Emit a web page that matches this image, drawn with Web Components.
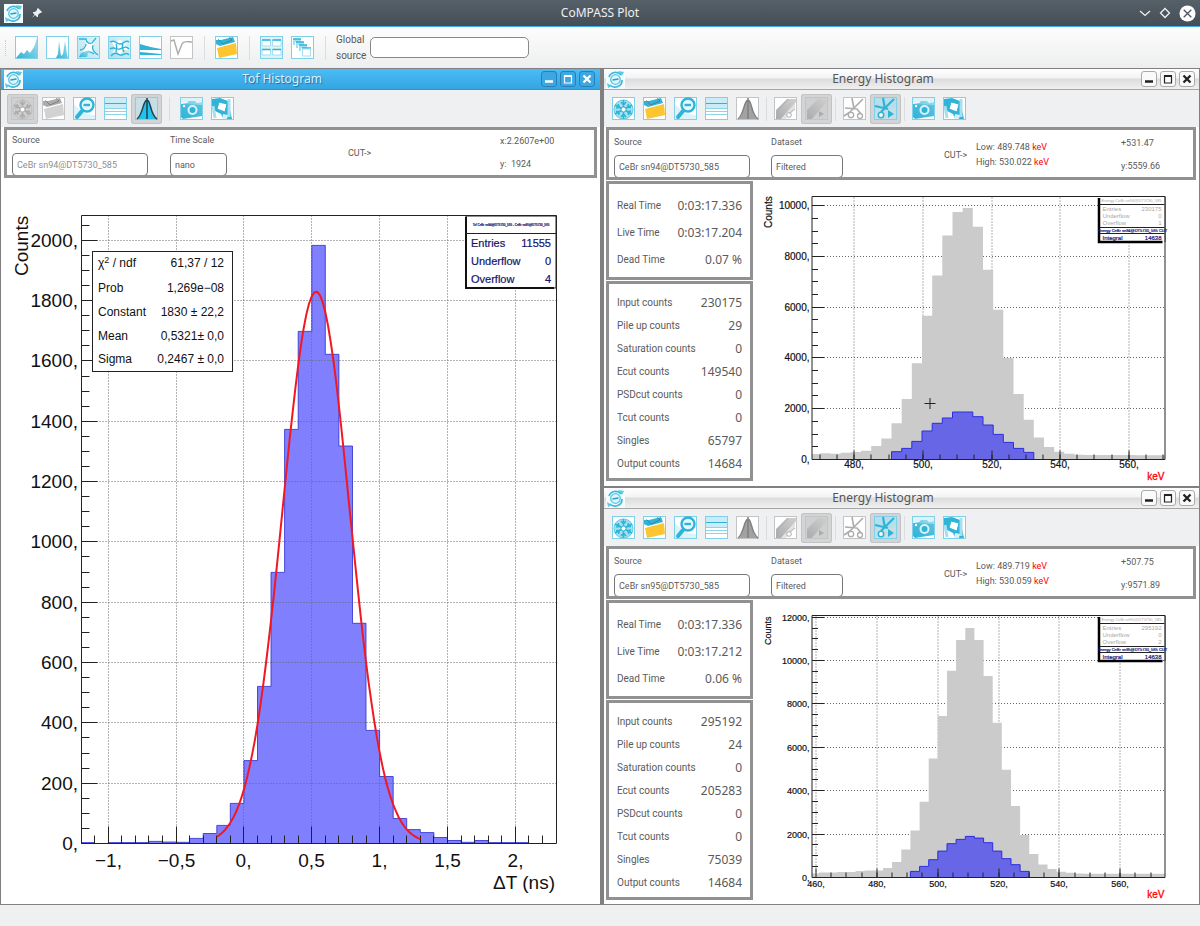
<!DOCTYPE html>
<html lang="en">
<head>
<meta charset="utf-8">
<meta name="viewport" content="width=device-width, initial-scale=1">
<title>CoMPASS Plot</title>
<style>
  html, body { margin: 0; height: 100%; }
  body { background: #eff0f1; color: #5a5a5a; font-family: Roboto, "Liberation Sans", sans-serif; }
</style>
</head>
<body>
<compass-app></compass-app>

<script>
/* ---------- icons ---------- */
const FRAME = '<rect x=".5" y=".5" width="22" height="22" fill="url(#bg)" stroke="var(--edge)"/>';
const ICONS = {
  spectrum: '<path d="M1 22 6 16 9 18 12 14 15 17 19 11 22 2V22z" fill="url(#g)"/>',
  peaks: '<path d="M10 22 12 18 13 5 15 20 17 18 19 5 21 18 22 22z" fill="url(#g)"/>',
  scatter: '<path d="M1 1H22V22H1z" fill="url(#g)" opacity=".35"/><path d="M7 2C10 7 13 8 19 3 16 9 15 12 18 18 14 14 10 14 3 21 8 13 11 10 7 2z" fill="#fff"/><path d="M2 3H9C9 7 13 8 15 7L19 2M9 8C9 11 6 14 3 14M16 9C15 12 16 16 21 19M3 21C8 15 12 14 17 18" fill="none" stroke="var(--ink)" stroke-width="1.3"/><path d="M4 17 12 14 10 21H2z" fill="url(#g)"/>',
  scatter2: '<path d="M1 1H22V22H1z" fill="url(#g)" opacity=".4"/><path d="M3 4 9 6 12 3 15 7 20 5 17 10 20 14 15 14 12 19 9 15 4 18 7 12z" fill="#fff"/><path d="M2 6C7 3 8 8 12 8S18 3 21 6M2 13C6 10 9 14 12 13S18 9 21 13M3 20C7 15 9 18 12 19S18 15 21 19M8 8C10 11 8 13 8 16M15 8C13 11 15 13 16 16" fill="none" stroke="var(--ink)" stroke-width="1.4"/>',
  bands: '<path d="M1 9 22 13V14H1zM1 16 22 18V19H1z" fill="var(--ink)"/><path d="M1 8 11 11H1z" fill="var(--ink)"/>',
  wave: '<path d="M1 5 4 4 8 18 12 8C14 4 18 6 22 6" fill="none" stroke="var(--ink)" stroke-width="1.4"/>',
  open: '<path d="M1 8V4L6 4 18 1 20 6 5 10z" fill="var(--ink)"/><path d="M3 3 8 8 17 4 14 1" fill="none" stroke="#555" stroke-opacity=".5"/><path d="M2 12 21 7 22 18 4 22z" fill="var(--folder)"/>',
  tile: '<path d="M1 1H22V22H1z" fill="var(--soft)" opacity=".4"/><path d="M2 4H10.500V10H2zM12.500 4H21V10H12.500zM2 13.500H10.500V19H2zM12.500 13.500H21V19H12.500z" fill="#fff" stroke="var(--soft)"/><path d="M2 4H10.500M12.500 4H21M2 13.500H10.500M12.500 13.500H21" stroke="var(--ink)" stroke-width="1.600"/>',
  cascade: '<path d="M2 3H10V6H4V9H2zM5 6H13V9H7V12H5zM8 9H16V12H10V15H8z" fill="var(--soft)"/><path d="M2 3H10M5 6H13M8 9H16M11 12H20" stroke="var(--ink)" stroke-width="1.500"/><rect x="11.500" y="13" width="8" height="7" fill="#fff" stroke="var(--soft)"/>',
  freeze: '<circle cx="11.5" cy="12.500" r="10" fill="var(--soft)"/><path d="M11.500 3V22M3 8 20 17M3 17 20 8M9 5 11.500 8 14 5M9 20 11.500 17 14 20M4 11 7.500 10.500 6 7M19 14 15.500 14.500 17 18M4 14.500 7.500 14.500 6.500 18M19 10.500 15.500 10.500 16.500 7" fill="none" stroke="var(--ink)" stroke-width="1.500"/><circle cx="11.500" cy="12.500" r="9.500" fill="none" stroke="var(--ink)" stroke-opacity=".5"/><circle cx="11.500" cy="12.500" r="2.500" fill="#fff" stroke="var(--ink)"/>',
  zoom: '<path d="M1 8C5 9 8 18 22 18V22H1z" fill="var(--soft)" opacity=".4"/><circle cx="14" cy="8" r="6.500" fill="#e4f7fc" stroke="var(--ink)" stroke-width="2.400"/><path d="M9 14 4 20" stroke="var(--ink)" stroke-width="4" stroke-linecap="round"/><path d="M10.500 8H17" stroke="var(--ink)" stroke-width="2.400"/>',
  rows: '<rect x="1" y="1" width="21" height="10" fill="var(--soft)" opacity=".6"/><path d="M1 11.500H22M1 14.500H22M1 17.500H22" stroke="var(--ink)" opacity=".55"/><path d="M1 6.500H22" stroke="var(--ink)"/>',
  fit: '<path d="M3 22C8 18 8 3 12 3S15 18 21 22z" fill="var(--fitfill)"/><path d="M2 22C8 18 8 3 12 3S15 18 22 22M12 1V22" fill="none" stroke="var(--fitline)" stroke-width="1.500"/>',
  paint: '<path d="M2 22V13L13 2H22V5L7 22z" fill="url(#g)"/><path d="M3 20 4 13 14 2" stroke="var(--ink)" fill="none"/><path d="M7 22 21 6V11L12 22z" fill="var(--soft)" opacity=".6"/><circle cx="15" cy="18" r="2.300" fill="#fff" stroke="var(--ink)"/><path d="M16 16 21 12" stroke="var(--ink)"/>',
  paintplay: '<path d="M2 22V13L13 2H22V5L7 22z" fill="url(#g)"/><path d="M7 22 21 6V22z" fill="var(--soft)"/><path d="M14 14 19 17 14 20z" fill="var(--ink)"/>',
  cut: '<path d="M20 2 7 15M2 11 14 12 18 17M9 1 11 12M1 19 7 15" stroke="var(--ink)" stroke-width="1.600" fill="none"/><circle cx="8" cy="18" r="2.700" fill="#fff" stroke="var(--ink)" stroke-width="1.300"/><circle cx="17" cy="19" r="2.500" fill="#fff" stroke="var(--ink)" stroke-width="1.300"/>',
  cutplay: '<path d="M1 1H22V10L14 13 4 12 1 15z" fill="var(--soft)" opacity=".5"/><path d="M20 2 7 15M1 9 14 12M9 1 11 12" stroke="var(--ink)" stroke-width="2.200" fill="none"/><circle cx="7" cy="18" r="2.700" fill="#fff" stroke="var(--ink)" stroke-width="1.600"/><path d="M14 13 20 17 14 21z" fill="var(--ink)"/>',
  camera: '<path d="M1 1H22V5L14 6 12 4 1 6z" fill="var(--soft)" opacity=".4"/><path d="M1 7 7 6 9 4H15L17 6 22 5V19L3 22 1 20z" fill="url(#g)"/><path d="M1 7 22 8V19L2 21z" fill="var(--ink)" opacity=".6"/><circle cx="12.500" cy="13" r="4" fill="var(--ink)" stroke="#d9f4fb" stroke-width="2"/><circle cx="4" cy="9" r="1.200" fill="#fff"/>',
  export: '<path d="M1 10V2L9 1 17 4 21 22H12L10 17 4 14z" fill="var(--ink)"/><path d="M18 2V20M2 9 4 21" stroke="var(--soft)" stroke-width="3"/><path d="M8 5 16 7 14 15 6 12z" fill="#fff" stroke="var(--ink)"/><path d="M12 17 17 18 16 22H11z" fill="#fff" opacity=".8"/>'
};
const APP_ICON = `<svg viewBox="0 0 19 19" width="19" height="19" aria-hidden="true"><rect width="19" height="19" fill="#f4fcff"/>
  <path d="M3 7A7 7 0 0 1 15 5M16 10A7 7 0 0 1 4 15" fill="none" stroke="#3db6da" stroke-width="1.700"/>
  <circle cx="9.500" cy="9.500" r="4.800" fill="#dcf6fc" stroke="#58c6e4" stroke-width="1.300"/>
  <path d="M6.500 10 12.500 9" stroke="#2a9dc4" stroke-width="1.300"/><path d="M12 1 18 2 16 6zM1 13 6 16 2 18z" fill="#5cc8e5"/></svg>`;

const define = (name, html, init) => {
  const template = document.createElement('template');
  template.innerHTML = html;
  customElements.define(name, class extends HTMLElement {
    constructor() {
      super();
      this.attachShadow({ mode: 'open' }).append(template.content.cloneNode(true));
    }
    connectedCallback() { if (init && !this.ready) { this.ready = true; init(this, this.shadowRoot); } }
  });
};

/* ---------- toolbar pieces ---------- */
define('tool-button', `
<style>
  :host { display: block; --ink: #2fb3d7; --edge: #7fd0e8; --soft: #a5e0f0; --folder: #fdc52f; --fitfill: #1fc3ee; --fitline: #24414c; }
  :host([disabled]) { --ink: #acacac; --edge: #c4c4c4; --soft: #cfcfcf; --folder: #d2d2d2; --fitfill: #a2a2a2; --fitline: #808080; }
  button { display: block; width: 31px; height: 30px; margin: 0; padding: 3px 4px; border: 0; border-radius: 3px; background: none; }
  :host([pressed]) button { background: #d3d4d5; box-shadow: inset 0 0 0 1px #c2c3c4; }
  svg { display: block; }
</style>
<button type="button"></button>`, (el, root) => {
  const b = root.querySelector('button');
  b.setAttribute('aria-label', el.getAttribute('label'));
  b.disabled = el.hasAttribute('disabled');
  if (el.hasAttribute('pressed')) b.setAttribute('aria-pressed', 'true');
  const top = el.hasAttribute('pressed') ? (el.hasAttribute('disabled') ? '#d0d0d0' : '#c6dfe6') : '#ffffff';
  b.innerHTML = `<svg viewBox="0 0 23 23" width="23" height="23" aria-hidden="true"><defs>
    <linearGradient id="bg" x1="0" y1="0" x2="1" y2="1"><stop offset="0" stop-color="${top}"/><stop offset="1" stop-color="${top}"/></linearGradient>
    <linearGradient id="g" x1="0" y1="1" x2="1" y2="0"><stop offset="0" stop-color="var(--ink)"/><stop offset="1" stop-color="var(--soft)"/></linearGradient>
    </defs>${FRAME}${ICONS[el.getAttribute('icon')]}</svg>`;
});

define('tool-gap', `
<style>
  :host { display: flex; width: 7px; height: 24px; justify-content: center; }
  :host([wide]) { width: 14px; }
  i { width: 1px; background: #dcddde; }
</style><i></i>`);

define('readout-field', `
<style>
  :host { display: flex; flex-direction: column; align-items: flex-start; gap: 6px; }
  label { font-size: 9px; line-height: 14px; }
  input { box-sizing: border-box; width: var(--field, 72px); height: 23px; margin: 0; padding: 0 4px; border: 1px solid #777;
    border-radius: 4px; background: #fff; color: inherit; font: 9px/20px Roboto, "Liberation Sans", sans-serif; }
  :host([dim]) input { color: #8f8f8f; }
</style>
<label for="f"></label><input id="f" type="text" readonly>`, (el, root) => {
  root.querySelector('label').textContent = el.getAttribute('label');
  root.querySelector('input').value = el.getAttribute('value');
});

/* ---------- bars of the main window ---------- */
define('main-title', `
<style>
  :host { display: flex; align-items: center; height: 26px; padding: 0 4px; border-bottom: 1px solid #3daee9;
    background: linear-gradient(#566069, #454e56); color: #eff0f1; }
  .side { display: flex; align-items: center; gap: 8px; width: 62px; }
  .side.end { justify-content: flex-end; }
  h1 { flex: 1; margin: 0; text-align: center; font: 12px/24px "Noto Sans", sans-serif; }
  button { display: block; margin: 0; padding: 0; border: 0; background: none; color: inherit; }
  svg { display: block; }
</style>
<div class="side">${APP_ICON}
  <button type="button" aria-label="Pin"><svg viewBox="0 0 12 12" width="12" height="12"><path d="M7 1 11 5 10 6 9 6 7 8 7 10 6 10 4 8 1 11 3.500 7.500 2 6 2 5 4 5 6 3 6 2z" fill="#eff0f1"/></svg></button></div>
<h1>CoMPASS Plot</h1>
<div class="side end">
  <button type="button" aria-label="Minimize"><svg viewBox="0 0 12 12" width="12" height="12"><path d="M1 4 6 8.500 11 4" fill="none" stroke="#eff0f1" stroke-width="1.300"/></svg></button>
  <button type="button" aria-label="Maximize"><svg viewBox="0 0 12 12" width="12" height="12"><path d="M6 1.500 10.500 6 6 10.500 1.500 6z" fill="none" stroke="#eff0f1" stroke-width="1.300"/></svg></button>
  <button type="button" aria-label="Close"><svg viewBox="0 0 18 18" width="17" height="17"><circle cx="9" cy="9" r="8.500" fill="#fcfcfc"/><path d="M5 5 13 13M13 5 5 13" stroke="#4d565e" stroke-width="1.400"/></svg></button>
</div>`);

define('main-tools', `
<style>
  :host { display: flex; align-items: center; height: 41px; padding: 0 5px; background: linear-gradient(#fdfdfd, #edeeef); }
  .grip { width: 6px; height: 16px; border-left: 1px dotted #ccc; box-sizing: border-box; }
  label { margin: 0 6px 0 4px; width: 28px; font-size: 10px; line-height: 16px; }
  input { box-sizing: border-box; width: 159px; height: 21px; margin: 0; padding: 0 5px; border: 1px solid #888; border-radius: 5px; background: #fff; }
</style>
<span class="grip"></span>
<tool-button icon="spectrum" label="Energy histogram"></tool-button>
<tool-button icon="peaks" label="Time histogram"></tool-button>
<tool-button icon="scatter" label="PSD plot"></tool-button>
<tool-button icon="scatter2" label="2D plot"></tool-button>
<tool-button icon="bands" label="MCS plot"></tool-button>
<tool-button icon="wave" label="Waveform" disabled></tool-button>
<tool-gap wide></tool-gap>
<tool-button icon="open" label="Open"></tool-button>
<tool-gap wide></tool-gap>
<tool-button icon="tile" label="Tile windows"></tool-button>
<tool-button icon="cascade" label="Cascade windows"></tool-button>
<tool-gap wide></tool-gap>
<label for="global">Global source</label><input id="global" type="text">`);

/* ---------- child window ---------- */
define('plot-window', `
<style>
  :host { display: flex; flex-direction: column; box-sizing: border-box; min-width: 0; min-height: 0; background: #fff;
    border: solid #808080; border-width: 1px 1px 1px 2px; }
  :host([active]) { border-width: 1px 2px 1px 1px; }
  header { display: flex; align-items: center; height: 20px; padding: 0 4px 0 2px; border-bottom: 1px solid #a5a5a5;
    background: linear-gradient(#fff, #f3f3f3 45%, #dcdcdc 50%, #f0f0f0); color: #555; }
  :host([active]) header { padding: 0 5px 0 3px; background: linear-gradient(#4bbcf5, #35a5e2); border-color: #3691c4; color: #d9eefa; text-shadow: 1px 1px 1px #1d6d9e; }
  svg { display: block; }
  h2 { flex: 1; margin: 0; text-align: center; font: 12px/20px "Noto Sans", sans-serif; }
  .buttons { display: flex; gap: 3px; }
  button { display: block; width: 16px; height: 16px; margin: 0; padding: 0; border: 1px solid #aaa; border-radius: 3px; background: #fafafa; color: #222; }
  :host([active]) button { border-color: #2682b6; background: #3ba8e3; color: #fff; }
  nav { display: flex; align-items: center; height: 37px; padding: 0 4px; background: #eff0f1; }
  :host([active]) nav { padding: 0 6px; }
</style>
<header>${APP_ICON}<h2></h2><div class="buttons">
  <button type="button" aria-label="Minimize"><svg viewBox="0 0 14 14" width="14" height="14"><path d="M3 9.500H11" stroke="currentColor" stroke-width="2.500"/></svg></button>
  <button type="button" aria-label="Maximize"><svg viewBox="0 0 14 14" width="14" height="14"><path d="M3.500 4V11H10.500V4z" fill="none" stroke="currentColor" stroke-width="1.200"/><path d="M3 4H11" stroke="currentColor" stroke-width="2"/></svg></button>
  <button type="button" aria-label="Close"><svg viewBox="0 0 14 14" width="14" height="14"><path d="M3.500 3.500 10.500 10.500M10.500 3.500 3.500 10.500" stroke="currentColor" stroke-width="2.300"/></svg></button>
</div></header>
<nav><slot name="tools"></slot></nav>
<slot></slot>`, (el, root) => { root.querySelector('h2').textContent = el.getAttribute('heading'); });

define('energy-tools', `
<style>:host { display: flex; align-items: center; }</style>
<tool-button icon="freeze" label="Freeze"></tool-button>
<tool-button icon="open" label="Open"></tool-button>
<tool-button icon="zoom" label="Reset zoom"></tool-button>
<tool-button icon="rows" label="Statistics"></tool-button>
<tool-button icon="fit" label="Fit" disabled></tool-button>
<tool-gap></tool-gap>
<tool-button icon="paint" label="Edit region" disabled></tool-button>
<tool-button icon="paintplay" label="Apply region" pressed disabled></tool-button>
<tool-gap></tool-gap>
<tool-button icon="cut" label="Edit cut" disabled></tool-button>
<tool-button icon="cutplay" label="Apply cut" pressed></tool-button>
<tool-gap></tool-gap>
<tool-button icon="camera" label="Screenshot"></tool-button>
<tool-button icon="export" label="Save"></tool-button>`);

define('tof-tools', `
<style>:host { display: flex; align-items: center; }</style>
<tool-button icon="freeze" label="Freeze" pressed disabled></tool-button>
<tool-button icon="open" label="Open" disabled></tool-button>
<tool-button icon="zoom" label="Reset zoom"></tool-button>
<tool-button icon="rows" label="Statistics"></tool-button>
<tool-button icon="fit" label="Fit" pressed></tool-button>
<tool-gap wide></tool-gap>
<tool-button icon="camera" label="Screenshot"></tool-button>
<tool-button icon="export" label="Save"></tool-button>`);

define('info-panel', `
<style>
  :host { display: grid; box-sizing: border-box; height: 53px; margin: 0 3px 0 2px; padding: 5px 0 0 5px; overflow: hidden;
    border: 3px solid #919191; background: #fff; font-size: 9px; line-height: 15px;
    grid-template-columns: 157fr 173fr 32fr 145fr 72fr; }
  :host([tof]) { height: 51px; margin: 0 3px; padding-top: 3px; grid-template-columns: 158fr 178fr 152fr 94fr; }
</style><slot></slot>`);

define('cut-range', `
<style>
  :host { display: block; padding-top: 5px; white-space: nowrap; }
  b { font-weight: normal; color: #f00; }
</style>
<div>Low: <span id="lo"></span> <b>keV</b></div><div>High: <span id="hi"></span> <b>keV</b></div>`, (el, root) => {
  root.getElementById('lo').textContent = el.getAttribute('low');
  root.getElementById('hi').textContent = el.getAttribute('high');
});

define('cursor-pos', `
<style>:host { display: flex; flex-direction: column; gap: 8px; padding-top: 1px; white-space: pre; }</style>
<span id="x"></span><span id="y"></span>`, (el, root) => {
  root.getElementById('x').textContent = el.getAttribute('x');
  root.getElementById('y').textContent = el.getAttribute('y');
});

define('cut-label', `
<style>:host { display: block; padding-top: 13px; white-space: nowrap; }</style>CUT-&gt;`);

define('count-table', `
<style>
  :host { display: block; box-sizing: border-box; width: 147px; padding: 7px 8px 3px 8px; border: 3px solid #919191; background: #fff; }
  :host([times]) { --row: 27px; padding: 8px 8px 4px 8px; }
  table { width: 100%; border-collapse: collapse; }
  tr { height: var(--row, 23px); }
  th, td { padding: 0; font-weight: normal; white-space: nowrap; line-height: 16px; }
  th { text-align: left; font-size: 10px; }
  td { text-align: right; font: 12px/16px "Noto Sans", sans-serif; }
</style><table><tbody></tbody></table>`, (el, root) => {
  root.querySelector('tbody').innerHTML = el.getAttribute('rows').split(';')
    .map(r => r.split('=')).map(([k, v]) => `<tr><th scope="row">${k}</th><td>${v}</td></tr>`).join('');
});

define('plot-body', `
<style>
  :host { display: flex; flex: 1; min-height: 0; padding: 1px 0 0 2px; }
  .stats { display: flex; flex-direction: column; gap: 1px; }
</style><div class="stats"><slot name="stats"></slot></div><slot></slot>`);

/* ---------- charts ---------- */
const SVG_STYLE = `<style>
  :host { display: block; flex: 1; min-width: 0; min-height: 0; }
  svg { display: block; width: 100%; height: 100%; font-family: "Liberation Sans", Arial, sans-serif; fill: #111; }
  .grid { stroke: #666; stroke-dasharray: 1 2; fill: none; }
  .axis { stroke: #222; fill: none; }
</style>`;

// Axis frame, grid, ticks and tick labels; c maps data values to drawing units.
function axes(c) {
  const { left, right, top, bottom, X, Y, xt, yt, size } = c;
  const r = v => Math.floor(v) + 0.5;
  let grid = '', ticks = '', labels = '';
  xt.major.forEach(([v, s]) => {
    const x = r(X(v));
    grid += `M${x} ${bottom}V${top}`;
    ticks += `M${x} ${bottom}v-${c.long}`;
    labels += `<text x="${x}" y="${c.xBase}" text-anchor="middle">${s}</text>`;
  });
  for (let i = 0; i < xt.count; i++) {
    const x = X(xt.from + i * xt.step);
    if (x > left && x < right) ticks += `M${r(x)} ${bottom}v-${c.short}`;
  }
  for (let v = 0; v <= yt.max; v += yt.step) {
    const y = r(Y(v)), big = v % yt.major === 0;
    if (y < top) break;
    ticks += `M${left} ${y}h${big ? c.yLong : c.yShort}`;
    if (big) {
      if (v) grid += `M${left} ${y}H${right}`;
      labels += `<text x="${c.yLabel}" y="${y + c.drop}" text-anchor="end">${v},</text>`;
    }
  }
  return {
    grid: `<path class="grid" d="${grid}"/>`,
    ticks: `<path class="axis" d="${ticks}M${left} ${top}H${right}V${bottom}H${left}z"/>`,
    labels: `<g font-size="${size}">${labels}</g>`
  };
}

function steps(c, start, width, values) {
  const clamp = v => Math.max(c.left, Math.min(c.right, v)).toFixed(1);
  let d = '';
  values.forEach((v, i) => {
    const y = c.Y(v).toFixed(1);
    d += `${i ? 'V' + y : 'M' + clamp(c.X(start)) + ' ' + c.bottom + 'V' + y}H${clamp(c.X(start + (i + 1) * width))}`;
  });
  return d + `V${c.bottom}`;
}

define('tof-chart', SVG_STYLE + '<div id="host" style="display:contents"></div>', (el, root) => {
  const c = {
    left: 81.5, right: 556.5, top: 215.5, bottom: 843.5, size: 19,
    X: v => 243.9 + v * 135.7, Y: v => 843.5 - v * 0.3016,
    xt: { major: [[-1, '−1,'], [-.5, '−0,5'], [0, '0,'], [.5, '0,5'], [1, '1,'], [1.5, '1,5'], [2, '2,']], from: -1.1, step: .1, count: 34 },
    yt: { max: 2050, step: 50, major: 200 },
    long: 17, short: 8, yLong: 16, yShort: 8, xBase: 867, yLabel: 78, drop: 6
  };
  const a = axes(c);
  const bins = [3,0,3,3,3,7,5,4,17,33,60,133,275,521,899,1373,1698,1983,1622,1318,730,375,222,83,46,36,20,10,4,10,3,3,3];
  const fit = [];
  for (let t = -.2; t <= 1.301; t += .02)
    fit.push(c.X(t).toFixed(1) + ' ' + c.Y(1830 * Math.exp(-((t - .5321) ** 2) / (2 * .2467 ** 2))).toFixed(1));
  const hist = steps(c, -1.2, .1, bins);
  const pair = (y, k, v, l, rr) => `<text x="${l}" y="${y}">${k}</text><text x="${rr}" y="${y}" text-anchor="end">${v}</text>`;
  root.getElementById('host').innerHTML = `<svg viewBox="1 178 599 726" role="img" aria-label="Time of flight histogram with Gaussian fit">
    <path d="${hist}" fill="#8080ff"/>${a.grid}<path d="${hist}" fill="none" stroke="#2a2ad0" stroke-opacity=".8"/>${a.ticks}${a.labels}
    <polyline points="${fit.join(' ')}" fill="none" stroke="#f21822" stroke-width="2"/>
    <text transform="translate(28 276) rotate(-90)" font-size="19">Counts</text>
    <text x="555" y="889" text-anchor="end" font-size="19">ΔT (ns)</text>
    <rect x="92.500" y="251.500" width="140" height="120" fill="#fff" stroke="#222"/>
    <g font-size="12">
      <text x="98" y="267">χ<tspan dy="-4" font-size="9">2</tspan><tspan dy="4"> / ndf</tspan></text><text x="224" y="267" text-anchor="end">61,37 / 12</text>
      ${pair(292, 'Prob', '1,269e−08', 98, 224)}${pair(316, 'Constant', '1830 ± 22,2', 98, 224)}
      ${pair(340, 'Mean', '0,5321± 0,0', 98, 224)}${pair(363, 'Sigma', '0,2467 ± 0,0', 98, 224)}
    </g>
    <rect x="466" y="216" width="90" height="72" fill="#fff" stroke="#222"/><path d="M466 217V288H554" fill="none" stroke="#111" stroke-width="2"/><path d="M466 233.500H556" stroke="#222"/>
    <g fill="#14146b" stroke="#14146b" stroke-width=".2"><text x="511" y="226" font-size="3" text-anchor="middle">Tof CeBr sn94@DT5730_585 - CeBr sn95@DT5730_585</text>
      <g font-size="11">${pair(247, 'Entries', '11555', 471, 551)}${pair(265, 'Underflow', '0', 471, 551)}${pair(283, 'Overflow', '4', 471, 551)}</g></g>
  </svg>`;
});

const ENERGY = {
  a: {
    view: '754 181 445 305', label: 'Energy spectrum, channel 94', size: 10, top: 196.5, bottom: 459.5,
    X: v => 854.8 + (v - 480) * 3.43, Y: v => 459.4 - v * .02537,
    major: [480, 500, 520, 540, 560], from: 470, yMax: 10000, xBase: 468, unitY: 480, countsY: 228, countsX: 772, drop: 3,
    start: 467.13, width: 2.964, skip: 8,
    all: [210,240,225,260,290,340,526,829,1421,2382,3790,5659,7251,8830,9752,9909,9173,7475,5896,4001,2579,1566,869,487,303,224,185,175,170,170,170,170,165,165,165],
    cut: [303,434,711,1119,1421,1632,1869,1869,1684,1355,987,671,434,276],
    box: 197, name: 'Energy CeBr sn94@DT5730_585', entries: '230175', over: '1', integral: '14638', cursor: true
  },
  b: {
    view: '754 600 445 304', label: 'Energy spectrum, channel 95', size: 9, top: 615.5, bottom: 877.5,
    X: v => 877.3 + (v - 480) * 3.043, Y: v => 877.4 - v * .02168,
    major: [460, 480, 500, 520, 540, 560], from: 465, yMax: 12000, xBase: 887, unitY: 898, countsY: 645, countsX: 771, drop: 3,
    start: 458, width: 3.0043, skip: 11,
    all: [185,231,231,246,246,292,323,323,431,707,1292,2169,3491,5491,7444,9536,10951,11504,10951,9290,7136,4968,3291,1953,1077,600,385,261,215,175,169,169,169,169,169,169,169,169,169],
    cut: [277,508,815,1215,1553,1753,1892,1815,1600,1215,861,584,277],
    box: 616, name: 'Energy CeBr sn95@DT5730_585', entries: '295192', over: '2', integral: '14638'
  }
};
define('energy-chart', SVG_STYLE + '<div id="host" style="display:contents"></div>', (el, root) => {
  const e = ENERGY[el.getAttribute('channel')];
  const c = {
    ...e, left: 812.5, right: 1165.5,
    xt: { major: e.major.map(v => [v, v + ',']), from: e.from, step: 5, count: 22 },
    yt: { max: 12000, step: 500, major: 2000 },
    long: 9, short: 5, yLong: 12, yShort: 6, yLabel: 810
  };
  const a = axes(c), b = e.box;
  const cut = steps(c, e.start + e.skip * e.width, e.width, e.cut);
  const row = (y, k, v) => `<text x="1103" y="${b + y}">${k}</text><text x="1162" y="${b + y}" text-anchor="end">${v}</text>`;
  root.getElementById('host').innerHTML = `<svg viewBox="${e.view}" role="img" aria-label="${e.label}">
    ${a.grid}<path d="${steps(c, e.start, e.width, e.all)}" fill="#cbcbcb"/>
    <path d="${cut}" fill="#6666e6" stroke="#2c2ce0"/>${a.ticks}
    <g stroke="#111" stroke-width=".2">${a.labels}</g>
    <text transform="translate(${e.countsX} ${e.countsY}) rotate(-90)" font-size="${e.size}" stroke="#111" stroke-width=".2">Counts</text>
    <text x="1165" y="${e.unitY}" text-anchor="end" font-size="10" fill="#f00" stroke="#f00" stroke-width=".3">keV</text>
    ${e.cursor ? '<path d="M925 403.500H936M930.500 398V409" stroke="#222"/>' : ''}
    <rect x="1100" y="${b}" width="65" height="44" fill="#fff"/>
    <path d="M1099.500 ${b + 1}V${b + 45}H1163" fill="none" stroke="#000" stroke-width="2.500"/>
    <path d="M1100 ${b - .5}H1165.500V${b + 45}M1100 ${b + 7.5}H1165M1100 ${b + 30.5}H1165M1100 ${b + 36.500}H1165" fill="none" stroke="#222"/>
    <g font-size="6" fill="#a8a8a8"><text x="1132" y="${b + 5}" font-size="4" text-anchor="middle">${e.name}</text>
      ${row(14, 'Entries', e.entries)}${row(21, 'Underflow', '0')}${row(28, 'Overflow', e.over)}</g>
    <g font-size="6" fill="#14147a" stroke="#14147a" stroke-width=".2"><text x="1133" y="${b + 35}" font-size="4" text-anchor="middle">${e.name} CUT</text>${row(43, 'Integral', e.integral)}</g>
  </svg>`;
});

/* ---------- application ---------- */
define('compass-app', `
<style>
  :host { display: flex; flex-direction: column; min-height: 100%; height: 100vh; }
  main { flex: 1; min-height: 0; display: grid; grid-template-columns: 602fr 598fr; grid-template-rows: 419fr 418fr; }
  .tof { grid-row: 1 / 3; }
  footer { height: 21px; background: #eff0f1; }
</style>
<main-title></main-title>
<main-tools></main-tools>
<main>
  <plot-window class="tof" heading="Tof Histogram" active>
    <tof-tools slot="tools"></tof-tools>
    <info-panel tof>
      <readout-field label="Source" value="CeBr sn94@DT5730_585" dim style="--field: 136px"></readout-field>
      <readout-field label="Time Scale" value="nano" style="--field: 57px"></readout-field>
      <cut-label></cut-label>
      <cursor-pos x="x:2.2607e+00" y="y:  1924"></cursor-pos>
    </info-panel>
    <tof-chart></tof-chart>
  </plot-window>
  <plot-window heading="Energy Histogram">
    <energy-tools slot="tools"></energy-tools>
    <info-panel>
      <readout-field label="Source" value="CeBr sn94@DT5730_585" style="--field: 136px"></readout-field>
      <readout-field label="Dataset" value="Filtered"></readout-field>
      <cut-label></cut-label>
      <cut-range low="489.748" high="530.022"></cut-range>
      <cursor-pos x="+531.47" y="y:5559.66"></cursor-pos>
    </info-panel>
    <plot-body>
      <count-table slot="stats" times rows="Real Time=0:03:17.336;Live Time=0:03:17.204;Dead Time=0.07 %"></count-table>
      <count-table slot="stats" rows="Input counts=230175;Pile up counts=29;Saturation counts=0;Ecut counts=149540;PSDcut counts=0;Tcut counts=0;Singles=65797;Output counts=14684"></count-table>
      <energy-chart channel="a"></energy-chart>
    </plot-body>
  </plot-window>
  <plot-window heading="Energy Histogram">
    <energy-tools slot="tools"></energy-tools>
    <info-panel>
      <readout-field label="Source" value="CeBr sn95@DT5730_585" style="--field: 136px"></readout-field>
      <readout-field label="Dataset" value="Filtered"></readout-field>
      <cut-label></cut-label>
      <cut-range low="489.719" high="530.059"></cut-range>
      <cursor-pos x="+507.75" y="y:9571.89"></cursor-pos>
    </info-panel>
    <plot-body>
      <count-table slot="stats" times rows="Real Time=0:03:17.336;Live Time=0:03:17.212;Dead Time=0.06 %"></count-table>
      <count-table slot="stats" rows="Input counts=295192;Pile up counts=24;Saturation counts=0;Ecut counts=205283;PSDcut counts=0;Tcut counts=0;Singles=75039;Output counts=14684"></count-table>
      <energy-chart channel="b"></energy-chart>
    </plot-body>
  </plot-window>
</main>
<footer></footer>`);
</script>
</body>
</html>
